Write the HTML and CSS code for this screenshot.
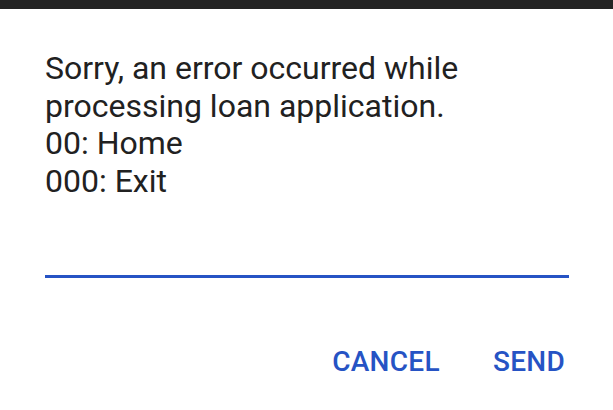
FILE: index.html
```html
<!DOCTYPE html>
<html lang="en">
<head>
<meta charset="utf-8">
<title>USSD dialog</title>
<link rel="stylesheet" href="styles.css">
</head>
<body>
<div class="status-bar"></div>
<main class="dialog">
  <p class="message">Sorry, an error occurred while<br>processing loan application.<br>00: Home<br>000: Exit</p>
  <div class="input-field"><input class="input" type="text" aria-label="Reply"></div>
  <div class="actions">
    <button class="btn" type="button">CANCEL</button>
    <button class="btn" type="button">SEND</button>
  </div>
</main>
</body>
</html>
```

FILE: styles.css
```css
html, body {
  margin: 0;
  padding: 0;
  background: #ffffff;
}
body {
  width: 613px;
  height: 410px;
  overflow: hidden;
  font-family: Roboto, "Noto Sans", sans-serif;
}
.status-bar {
  height: 9px;
  background: #232323;
}
.dialog {
  display: flex;
  flex-direction: column;
  padding: 41px 44px 0 45px;
}
.message {
  margin: 0;
  font-size: 32px;
  line-height: 37.5px;
  color: #212121;
}
.input-field {
  margin-top: 72px;
  border-bottom: 3px solid #2653c4;
}
.input {
  display: block;
  width: 100%;
  height: 3px;
  border: 0;
  padding: 0;
  outline: none;
  background: transparent;
}
.actions {
  display: flex;
  justify-content: flex-end;
  gap: 53px;
  margin-top: 67px;
  padding-right: 4px;
}
.btn {
  border: 0;
  background: none;
  padding: 0;
  font-family: Roboto, "Noto Sans", sans-serif;
  font-weight: 500;
  font-size: 28px;
  line-height: 33px;
  letter-spacing: 0.3px;
  color: #2653c4;
}
```
